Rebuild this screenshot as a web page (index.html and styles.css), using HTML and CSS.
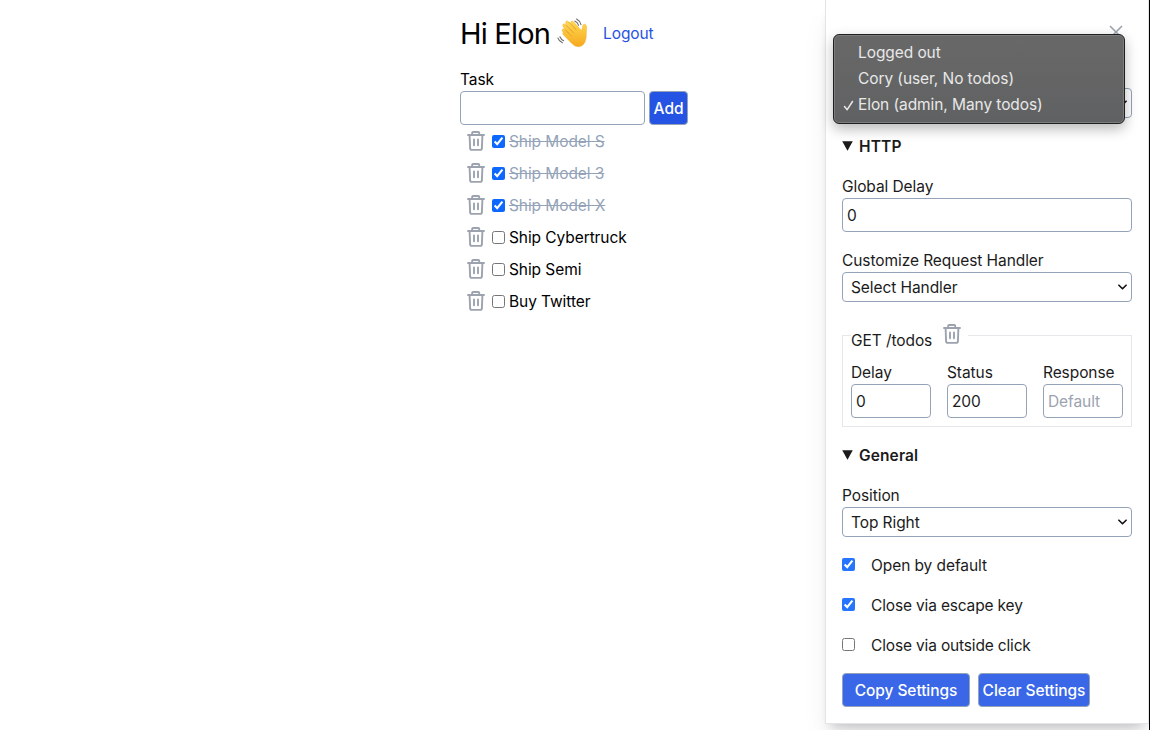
FILE: index.html
```html
<!DOCTYPE html>
<html lang="en">
<head>
<meta charset="utf-8">
<title>Todos</title>
<link rel="stylesheet" href="styles.css">
</head>
<body>
<svg class="defs" width="0" height="0">
  <symbol id="trash" viewBox="0 0 18 20">
    <path d="M1 4h16M5.2 3.8V1.9q0-.9.9-.9h5.2q.9 0 .9.9v1.9M2.6 4.2l.5 12.9q.1 1.8 1.8 1.8h8.2q1.7 0 1.8-1.8l.5-12.9M7 8.4v5.8M11 8.4v5.8" fill="none" stroke="#9ca3af" stroke-width="1.9" stroke-linecap="round" stroke-linejoin="round"/>
  </symbol>
</svg>
<div class="page">
  <main class="app">
    <header class="greeting">
      <h1 class="title">Hi Elon</h1>
      <svg class="wave" viewBox="0 0 32 32" role="img" aria-label="waving hand">
        <defs><linearGradient id="skin" x1="0" y1="0" x2="0" y2="1"><stop offset="0" stop-color="#ffd84f"/><stop offset="1" stop-color="#f6a91f"/></linearGradient></defs>
        <g transform="translate(1.8 .8) scale(.94 .98)">
          <path d="M4.1 13.1Q3 11.6 4.4 10.7Q5.5 10 6.6 11.1L11 15.5L4.8 8.3Q3.7 6.8 4.9 5.7Q6.1 4.7 7.4 6L14.3 12.7L8 5.2Q7 3.7 8.2 2.7Q9.5 1.8 10.8 3.1L18.3 10.5L13.6 4.9Q12.6 3.4 13.8 2.6Q15 1.9 16.2 3.1L24 11.2Q25.4 12.7 25.7 10.8L26.3 7.4Q26.8 5.6 28.3 5.7Q30.4 5.8 30.5 8.1Q30.6 11.2 30.4 14.3Q30.6 21 28.7 24.8Q26 29.8 21 29.4Q17.3 29.1 14 25.7L5 16.8Q3.8 15.4 4.9 14.5Z" fill="url(#skin)" stroke="#eaa51f" stroke-width=".4"/>
          <path d="M7 11.5l7.4 7M7.7 6.3l9 8.9M11 3.4l8.6 8.7" fill="none" stroke="#dc9420" stroke-width=".7"/>
        </g>
        <path d="M18.4 3.2q2.7 1.2 3.9 4.4M20.2 1q3.4 1.8 4.6 5.8M3 19.4q1 2.8 3.9 4M.9 20.6q1.1 3.6 4.7 5" fill="none" stroke="#6b6b6b" stroke-width="1.1" stroke-linecap="round"/>
      </svg>
      <a class="logout">Logout</a>
    </header>
    <label class="label task" for="task">Task</label>
    <div class="entry"><input class="input" id="task"><button class="button add">Add</button></div>
    <ul class="todos">
      <li class="todo done"><svg class="trash"><use href="#trash"/></svg><input type="checkbox" class="check" checked><span class="name">Ship Model S</span></li>
      <li class="todo done"><svg class="trash"><use href="#trash"/></svg><input type="checkbox" class="check" checked><span class="name">Ship Model 3</span></li>
      <li class="todo done"><svg class="trash"><use href="#trash"/></svg><input type="checkbox" class="check" checked><span class="name">Ship Model X</span></li>
      <li class="todo"><svg class="trash"><use href="#trash"/></svg><input type="checkbox" class="check"><span class="name">Ship Cybertruck</span></li>
      <li class="todo"><svg class="trash"><use href="#trash"/></svg><input type="checkbox" class="check"><span class="name">Ship Semi</span></li>
      <li class="todo"><svg class="trash"><use href="#trash"/></svg><input type="checkbox" class="check"><span class="name">Buy Twitter</span></li>
    </ul>
  </main>
  <aside class="panel">
    <div class="close-row"><svg class="close" viewBox="0 0 14 14"><path d="M1 1l12 12M13 1L1 13"/></svg></div>
    <div class="select persona"><span></span><svg class="chevron" viewBox="0 0 10 6"><path d="M1 1l4 4 4-4"/></svg></div>
    <ul class="menu">
      <li class="option">Logged out</li>
      <li class="option">Cory (user, No todos)</li>
      <li class="option"><svg class="tick" viewBox="0 0 10 11"><path d="M1 6.6L3.7 9.7L9 1.5"/></svg>Elon (admin, Many todos)</li>
    </ul>
    <h2 class="section http"><svg class="triangle" viewBox="0 0 11 10"><path d="M.2.3h10.6L5.5 9.8z"/></svg><span class="heading">HTTP</span></h2>
    <label class="label">Global Delay</label>
    <input class="input wide" value="0">
    <label class="label handler">Customize Request Handler</label>
    <div class="select"><span>Select Handler</span><svg class="chevron" viewBox="0 0 10 6"><path d="M1 1l4 4 4-4"/></svg></div>
    <fieldset class="request">
      <legend class="legend"><span class="route">GET /todos</span><svg class="trash"><use href="#trash"/></svg></legend>
      <div class="fields">
        <div class="field"><label class="label">Delay</label><input class="input" value="0"></div>
        <div class="field"><label class="label">Status</label><input class="input" value="200"></div>
        <div class="field"><label class="label">Response</label><input class="input" placeholder="Default"></div>
      </div>
    </fieldset>
    <h2 class="section general"><svg class="triangle" viewBox="0 0 11 10"><path d="M.2.3h10.6L5.5 9.8z"/></svg><span class="heading">General</span></h2>
    <label class="label">Position</label>
    <div class="select"><span>Top Right</span><svg class="chevron" viewBox="0 0 10 6"><path d="M1 1l4 4 4-4"/></svg></div>
    <div class="settings">
      <label class="setting"><input type="checkbox" class="check" checked><span>Open by default</span></label>
      <label class="setting"><input type="checkbox" class="check" checked><span>Close via escape key</span></label>
      <label class="setting"><input type="checkbox" class="check"><span>Close via outside click</span></label>
    </div>
    <div class="actions"><button class="button copy">Copy Settings</button><button class="button clear">Clear Settings</button></div>
  </aside>
  <div class="edge"></div>
</div>
</body>
</html>
```
FILE: styles.css
```css
* { box-sizing: border-box; }
body { margin: 0; background: #fff; color: #000; font: 15.5px/24px Inter, "Liberation Sans", sans-serif; letter-spacing: -.08px; overflow: hidden; }
h1, h2, ul { margin: 0; padding: 0; list-style: none; }
input, button { font: inherit; color: inherit; letter-spacing: inherit; }
.defs { display: block; }
.page { display: flex; height: 730px; overflow: hidden; }
.app { flex: 1; padding-left: 460px; min-width: 0; }
.greeting { display: flex; align-items: center; height: 67px; }
.title { font-size: 29px; font-weight: 400; line-height: 36px; letter-spacing: -.8px; width: 97px; white-space: nowrap; }
.wave { width: 31px; height: 31px; }
.logout { color: #2553e4; margin-left: 15px; }
.label { display: block; height: 24px; line-height: 26px; white-space: nowrap; }
.entry { display: flex; gap: 4px; }
.input { display: block; width: 185px; height: 34px; padding: 0 4px; border: 1px solid #94a3b8; border-radius: 4px; background: #fff; outline: 0; }
.input::placeholder { color: #9ca3af; opacity: 1; }
.button { height: 34px; padding: 2px 0 0; border: 1px solid #94a3b8; border-radius: 4px; background: #2553e4; color: #fff; font-weight: 500; white-space: nowrap; }
.add { width: 39px; }
.todo { display: flex; align-items: center; height: 32px; padding-left: 7px; white-space: nowrap; }
.trash { width: 18px; height: 20px; flex: none; }
.check { width: 13px; height: 13px; margin: 0; flex: none; accent-color: #0d68ff; }
.todo .check { margin: 1px 4px 0 7px; }
.name { padding-top: 2px; }
.done .name { color: #94a3b8; text-decoration: line-through; }
.panel { position: relative; width: 324px; height: 724px; padding: 0 16px; border: solid #e2e4e8; border-width: 0 1px 1px; color: #1b1b1b; background: #fff; box-shadow: 0 20px 25px -5px rgba(0,0,0,.1), 0 8px 10px -6px rgba(0,0,0,.18); }
.panel .input { color: #1b1b1b; }
.panel .input::placeholder { color: #9ca3af; }
.panel .check { accent-color: #2675ff; }
.edge { width: 1px; background: #000; }
.close-row { display: flex; justify-content: flex-end; height: 88px; padding: 25px 9px 0 0; }
.close { width: 14px; height: 14px; fill: none; stroke: #9ca3af; stroke-width: 1.6; }
.select { display: flex; align-items: center; justify-content: space-between; height: 30px; padding: 0 4px 0 8px; border: 1px solid #94a3b8; border-radius: 4px; background: #fff; }
.select span { padding-top: 2px; }
.chevron { width: 9px; height: 6px; fill: none; stroke: #111; stroke-width: 1.8; stroke-linecap: round; stroke-linejoin: round; }
.menu { position: absolute; left: 7px; top: 34px; width: 292px; height: 90px; padding: 5px 0; border: 1px solid #202020; border-radius: 6px; background: linear-gradient(#686868, #606162); box-shadow: inset 0 0 0 1px #7c7c7c, 0 5px 13px rgba(0,0,0,.28); color: #e8e8e8; }
.option { position: relative; height: 26px; padding-left: 24px; line-height: 25px; white-space: nowrap; }
.tick { position: absolute; left: 9px; top: 8px; width: 11px; height: 11px; fill: none; stroke: #e8e8e8; stroke-width: 1.5; stroke-linecap: round; stroke-linejoin: round; }
.section { display: flex; align-items: center; gap: 6px; height: 24px; font-size: 15.5px; font-weight: 600; letter-spacing: .12px; }
.heading { padding-top: 2px; }
.triangle { width: 11px; height: 10px; fill: #1b1b1b; }
.http { margin: 16px 0; }
.wide { width: 290px; }
.handler { margin-top: 16px; }
.request { height: 104px; margin: 21px 0 0; padding: 0 8px; border: 1px solid #e5e7eb; min-width: 0; }
.legend { display: flex; height: 24px; padding: 0; width: 117px; }
.legend .trash { margin-top: 1px; }
.route { width: 92px; padding-top: 6px; white-space: nowrap; }
.fields { display: flex; gap: 16px; padding-top: 13px; }
.field .input { width: 80px; }
.general { margin: 16px 0; }
.settings { display: flex; flex-direction: column; gap: 16px; margin-top: 16px; }
.setting { display: flex; align-items: center; gap: 16px; height: 24px; }
.setting span { padding-top: 2px; }
.setting:nth-child(n+2) span { letter-spacing: -.16px; }
.setting .check { margin-top: -1px; }
.actions { display: flex; gap: 8px; margin-top: 16px; }
.actions .button { background: #3967e8; }
.copy { width: 128px; }
.clear { width: 112px; }
```
